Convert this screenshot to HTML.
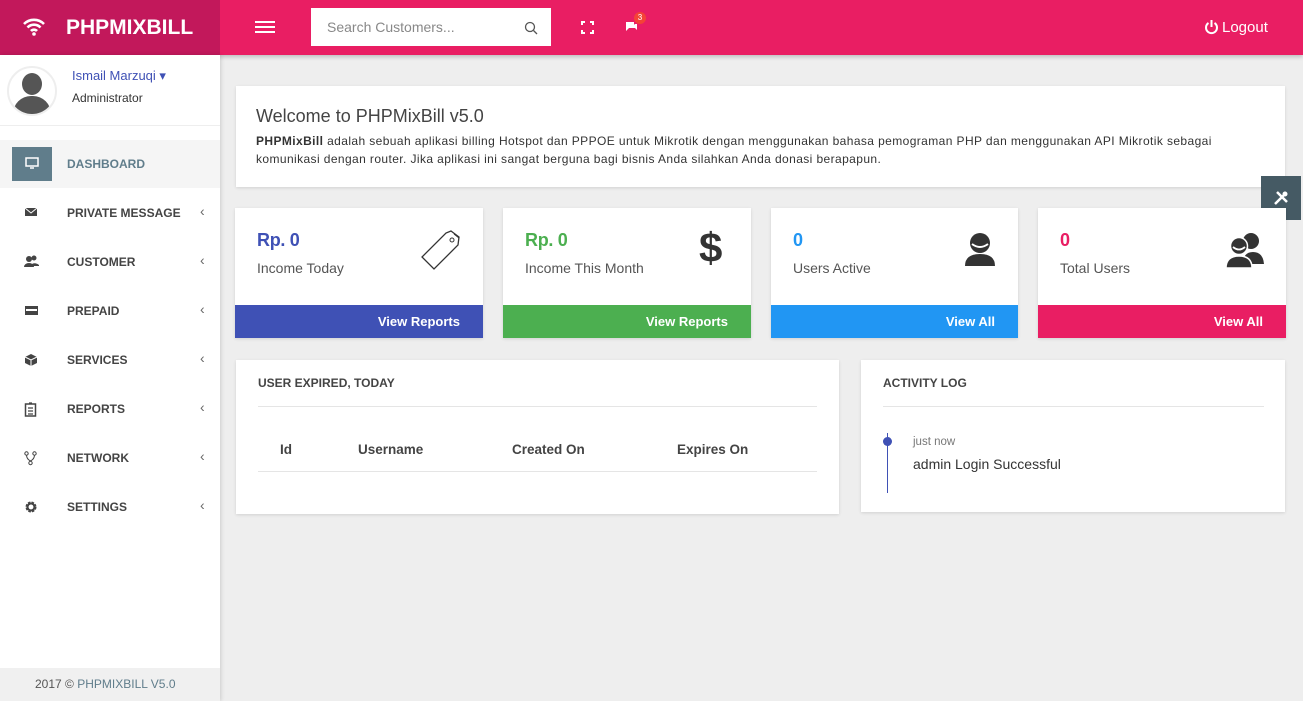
<!DOCTYPE html>
<html><head><meta charset="utf-8"><style>
*{box-sizing:border-box;margin:0;padding:0}
body{width:1303px;height:701px;overflow:hidden;background:#eee;font-family:"Liberation Sans",sans-serif;position:relative;color:#333}
.hdr{position:absolute;left:0;top:0;width:1303px;height:55px;background:#E91E63;box-shadow:0 2px 4px rgba(0,0,0,.2)}
.logo{position:absolute;left:0;top:0;width:220px;height:55px;background:#C2185B;color:#fff;font-weight:bold;font-size:21px;line-height:55px;padding-left:66px}
.side{position:absolute;left:0;top:55px;width:220px;height:646px;background:#fff;box-shadow:1px 0 4px rgba(0,0,0,.15)}
.item{position:absolute;left:0;width:220px;height:48px;font-size:12px;font-weight:bold;color:#444;letter-spacing:0}
.item .t{position:absolute;left:67px;top:17px}
.item .a{position:absolute;left:200px;top:14px;font-weight:normal;color:#666;font-size:14px}
.item svg{position:absolute;left:24px;top:17px}
.card{position:absolute;background:#fff;box-shadow:0 1px 3px rgba(0,0,0,.12)}
.box .v{position:absolute;left:22px;top:22px;font-size:18px;font-weight:bold;letter-spacing:-.3px}
.box .l{position:absolute;left:22px;top:52px;font-size:14px;color:#555}
.box .f{position:absolute;left:0;bottom:0;width:100%;height:33px;color:#fff;font-size:13px;font-weight:bold;text-align:right;padding-right:23px;line-height:33px}
.box svg{position:absolute}
</style></head><body>
<div class="hdr">
 <div class="logo">PHPMIXBILL</div>
 <svg style="position:absolute;left:23px;top:18px" width="22" height="18" viewBox="0 0 22 18"><path d="M1 6a14 14 0 0 1 20 0M4.5 9.5a9 9 0 0 1 13 0M8 13a4 4 0 0 1 6 0" stroke="#fff" stroke-width="2.6" fill="none"/><circle cx="11" cy="16" r="1.8" fill="#fff"/></svg>
 <div style="position:absolute;left:255px;top:21px;width:20px;height:2px;background:#fff;box-shadow:0 5px 0 #fff,0 10px 0 #fff"></div>
 <div style="position:absolute;left:311px;top:8px;width:240px;height:38px;background:#fff;font-size:14px;color:#888;line-height:38px;padding-left:16px">Search Customers...</div>
 <svg style="position:absolute;left:524px;top:21px" width="14" height="14"><circle cx="6" cy="6" r="4.5" stroke="#555" stroke-width="1.3" fill="none"/><path d="M9.5 9.5l3.5 3.5" stroke="#555" stroke-width="1.3"/></svg>
 <svg style="position:absolute;left:581px;top:21px" width="13" height="13"><path d="M1 4V1h3M9 1h3v3M12 9v3H9M4 12H1V9" stroke="#fff" stroke-width="2" fill="none"/></svg>
 <svg style="position:absolute;left:624px;top:19px" width="14" height="14"><path d="M2 3h8v6H5l-3 3z" fill="#fff"/><path d="M11 5h2v6l-2-2H6" fill="#fff"/></svg>
 <div style="position:absolute;left:634px;top:12px;width:12px;height:12px;border-radius:50%;background:#F44336;color:#fff;font-size:8px;text-align:center;line-height:12px">3</div>
 <svg style="position:absolute;left:1204px;top:19px" width="15" height="16"><path d="M4.5 4a5.5 5.5 0 1 0 6 0" stroke="#fff" stroke-width="2" fill="none"/><path d="M7.5 1v7" stroke="#fff" stroke-width="2"/></svg>
 <div style="position:absolute;left:1222px;top:19px;color:#fff;font-size:15px">Logout</div>
</div>
<div class="side">
 <div style="position:absolute;left:7px;top:11px;width:50px;height:50px;border-radius:50%;border:2px solid #eee;overflow:hidden;background:#fff">
  <div style="position:absolute;left:13px;top:5px;width:20px;height:22px;border-radius:50%;background:#555"></div>
  <div style="position:absolute;left:4px;top:28px;width:38px;height:22px;border-radius:18px 18px 0 0;background:#555"></div></div>
 <div style="position:absolute;left:72px;top:13px;color:#3F51B5;font-size:13px">Ismail Marzuqi ▾</div>
 <div style="position:absolute;left:72px;top:36px;font-size:12px;color:#333">Administrator</div>
 <div style="position:absolute;left:0;top:70px;width:220px;height:1px;background:#eee"></div>
 <div style="position:absolute;left:0;top:85px;width:220px;height:48px;background:#f5f5f5"></div>
 <div style="position:absolute;left:12px;top:92px;width:40px;height:34px;background:#607D8B"></div>
 <svg style="position:absolute;left:25px;top:102px" width="14" height="12"><rect x="1" y="1" width="12" height="8" stroke="#fff" stroke-width="1.5" fill="none"/><path d="M5 11h4" stroke="#fff" stroke-width="1.5"/></svg>
 <div style="position:absolute;left:67px;top:102px;font-size:12px;font-weight:bold;color:#607D8B">DASHBOARD</div>
 <div class="item" style="top:134px"><svg width="14" height="12"><rect x="1" y="2" width="12" height="8" fill="#444"/><path d="M1 2l6 5 6-5" stroke="#fff" fill="none"/></svg><span class="t">PRIVATE MESSAGE</span><span class="a">‹</span></div>
 <div class="item" style="top:183px"><svg width="15" height="12"><circle cx="5" cy="4" r="3" fill="#444"/><circle cx="10" cy="3" r="2.5" fill="#444"/><path d="M0 12a5 4 0 0 1 10 0zM8 9a5 4 0 0 1 7 1v1H9z" fill="#444"/></svg><span class="t">CUSTOMER</span><span class="a">‹</span></div>
 <div class="item" style="top:232px"><svg width="15" height="12"><rect x="1" y="2" width="13" height="9" fill="#444"/><rect x="2" y="5" width="11" height="2" fill="#fff"/></svg><span class="t">PREPAID</span><span class="a">‹</span></div>
 <div class="item" style="top:281px"><svg width="14" height="14"><path d="M7 1l6 3v6l-6 3-6-3V4z" fill="#444"/><path d="M1 4l6 3 6-3M7 7v6" stroke="#fff" fill="none"/></svg><span class="t">SERVICES</span><span class="a">‹</span></div>
 <div class="item" style="top:330px"><svg width="13" height="15"><rect x="1.5" y="2" width="10" height="12" stroke="#444" stroke-width="1.5" fill="none"/><path d="M4 6h5M4 9h5M4 12h5M5 1h3" stroke="#444" stroke-width="1.3"/></svg><span class="t">REPORTS</span><span class="a">‹</span></div>
 <div class="item" style="top:379px"><svg width="13" height="15"><circle cx="2.5" cy="2.5" r="1.7" stroke="#444" fill="none"/><circle cx="10.5" cy="2.5" r="1.7" stroke="#444" fill="none"/><circle cx="6.5" cy="12" r="1.7" stroke="#444" fill="none"/><path d="M2.5 4q0 4 4 6M10.5 4q0 4-4 6" stroke="#444" fill="none"/></svg><span class="t">NETWORK</span><span class="a">‹</span></div>
 <div class="item" style="top:428px"><svg width="14" height="14"><circle cx="7" cy="7" r="4" stroke="#444" stroke-width="3" stroke-dasharray="2.2 1" fill="none"/><circle cx="7" cy="7" r="3.5" stroke="#444" stroke-width="2" fill="none"/></svg><span class="t">SETTINGS</span><span class="a">‹</span></div>
 <div style="position:absolute;left:0;top:613px;width:220px;height:33px;background:#f0f0f0;font-size:12px;color:#555;line-height:33px;padding-left:35px">2017 © <span style="color:#607D8B">PHPMIXBILL V5.0</span></div>
</div>

<div class="card" style="left:236px;top:86px;width:1049px;height:101px">
 <div style="position:absolute;left:20px;top:20px;font-size:18px;color:#444">Welcome to PHPMixBill v5.0</div>
 <div style="position:absolute;left:20px;top:46px;width:1025px;white-space:nowrap;font-size:12px;line-height:18px;color:#333;letter-spacing:.4px"><b>PHPMixBill</b> adalah sebuah aplikasi billing Hotspot dan PPPOE untuk Mikrotik dengan menggunakan bahasa pemograman PHP dan menggunakan API Mikrotik sebagai<br>komunikasi dengan router. Jika aplikasi ini sangat berguna bagi bisnis Anda silahkan Anda donasi berapapun.</div>
</div>
<div style="position:absolute;left:1261px;top:176px;width:40px;height:44px;background:#455A64"></div>
<svg style="position:absolute;left:1273px;top:190px" width="16" height="16"><path d="M2 14L11 5M4 2l10 10" stroke="#fff" stroke-width="2.5"/><circle cx="12" cy="4" r="2.5" fill="#fff"/></svg>

<div class="card box" style="left:235px;top:208px;width:248px;height:130px"><div class="v" style="color:#3F51B5">Rp. 0</div><div class="l">Income Today</div>
 <svg style="left:186px;top:20px" width="42" height="44"><path d="M30 3l8 6-1 8-24 24-12-12 24-24z" stroke="#333" stroke-width="1.3" fill="none"/><path d="M33 6l5 4" stroke="#333" fill="none"/><circle cx="31" cy="12" r="2" stroke="#333" fill="none"/></svg>
 <div class="f" style="background:#3F51B5">View Reports</div></div>
<div class="card box" style="left:503px;top:208px;width:248px;height:130px"><div class="v" style="color:#4CAF50">Rp. 0</div><div class="l">Income This Month</div>
 <div style="position:absolute;left:196px;top:16px;font-size:42px;font-weight:bold;color:#333">$</div>
 <div class="f" style="background:#4CAF50">View Reports</div></div>
<div class="card box" style="left:771px;top:208px;width:247px;height:130px"><div class="v" style="color:#2196F3">0</div><div class="l">Users Active</div>
 <svg style="left:192px;top:24px" width="34" height="34"><circle cx="17" cy="11" r="10" fill="#333"/><path d="M9 12q8 6 16 0" stroke="#fff" stroke-width="2" fill="none"/><path d="M2 34q0-12 15-12t15 12z" fill="#333"/></svg>
 <div class="f" style="background:#2196F3">View All</div></div>
<div class="card box" style="left:1038px;top:208px;width:248px;height:130px"><div class="v" style="color:#E91E63">0</div><div class="l">Total Users</div>
 <svg style="left:187px;top:24px" width="40" height="36"><circle cx="26" cy="9" r="8" fill="#333"/><path d="M18 32q0-12 10-12t11 12z" fill="#333"/><circle cx="14" cy="14" r="8.5" fill="#333" stroke="#fff" stroke-width="1.5"/><path d="M8 15q6 5 12 0" stroke="#fff" stroke-width="1.8" fill="none"/><path d="M1 36q0-12 13-12t13 12z" fill="#333" stroke="#fff" stroke-width="1.5"/></svg>
 <div class="f" style="background:#E91E63">View All</div></div>

<div class="card" style="left:236px;top:360px;width:603px;height:154px">
 <div style="position:absolute;left:22px;top:16px;font-size:12px;font-weight:bold;color:#444">USER EXPIRED, TODAY</div>
 <div style="position:absolute;left:22px;top:46px;width:559px;height:1px;background:#e5e5e5"></div>
 <div style="position:absolute;left:44px;top:82px;font-size:13.5px;font-weight:bold;color:#444">Id</div>
 <div style="position:absolute;left:122px;top:82px;font-size:13.5px;font-weight:bold;color:#444">Username</div>
 <div style="position:absolute;left:276px;top:82px;font-size:13.5px;font-weight:bold;color:#444">Created On</div>
 <div style="position:absolute;left:441px;top:82px;font-size:13.5px;font-weight:bold;color:#444">Expires On</div>
 <div style="position:absolute;left:22px;top:111px;width:559px;height:1px;background:#e5e5e5"></div>
</div>
<div class="card" style="left:861px;top:360px;width:424px;height:152px">
 <div style="position:absolute;left:22px;top:16px;font-size:12px;font-weight:bold;color:#444">ACTIVITY LOG</div>
 <div style="position:absolute;left:22px;top:46px;width:381px;height:1px;background:#e5e5e5"></div>
 <div style="position:absolute;left:26px;top:73px;width:1px;height:60px;background:#3F51B5"></div>
 <div style="position:absolute;left:22px;top:77px;width:9px;height:9px;border-radius:50%;background:#3F51B5"></div>
 <div style="position:absolute;left:52px;top:76px;font-size:11.5px;color:#777">just now</div>
 <div style="position:absolute;left:52px;top:96px;font-size:14px;color:#333">admin Login Successful</div>
</div>
</body></html>
